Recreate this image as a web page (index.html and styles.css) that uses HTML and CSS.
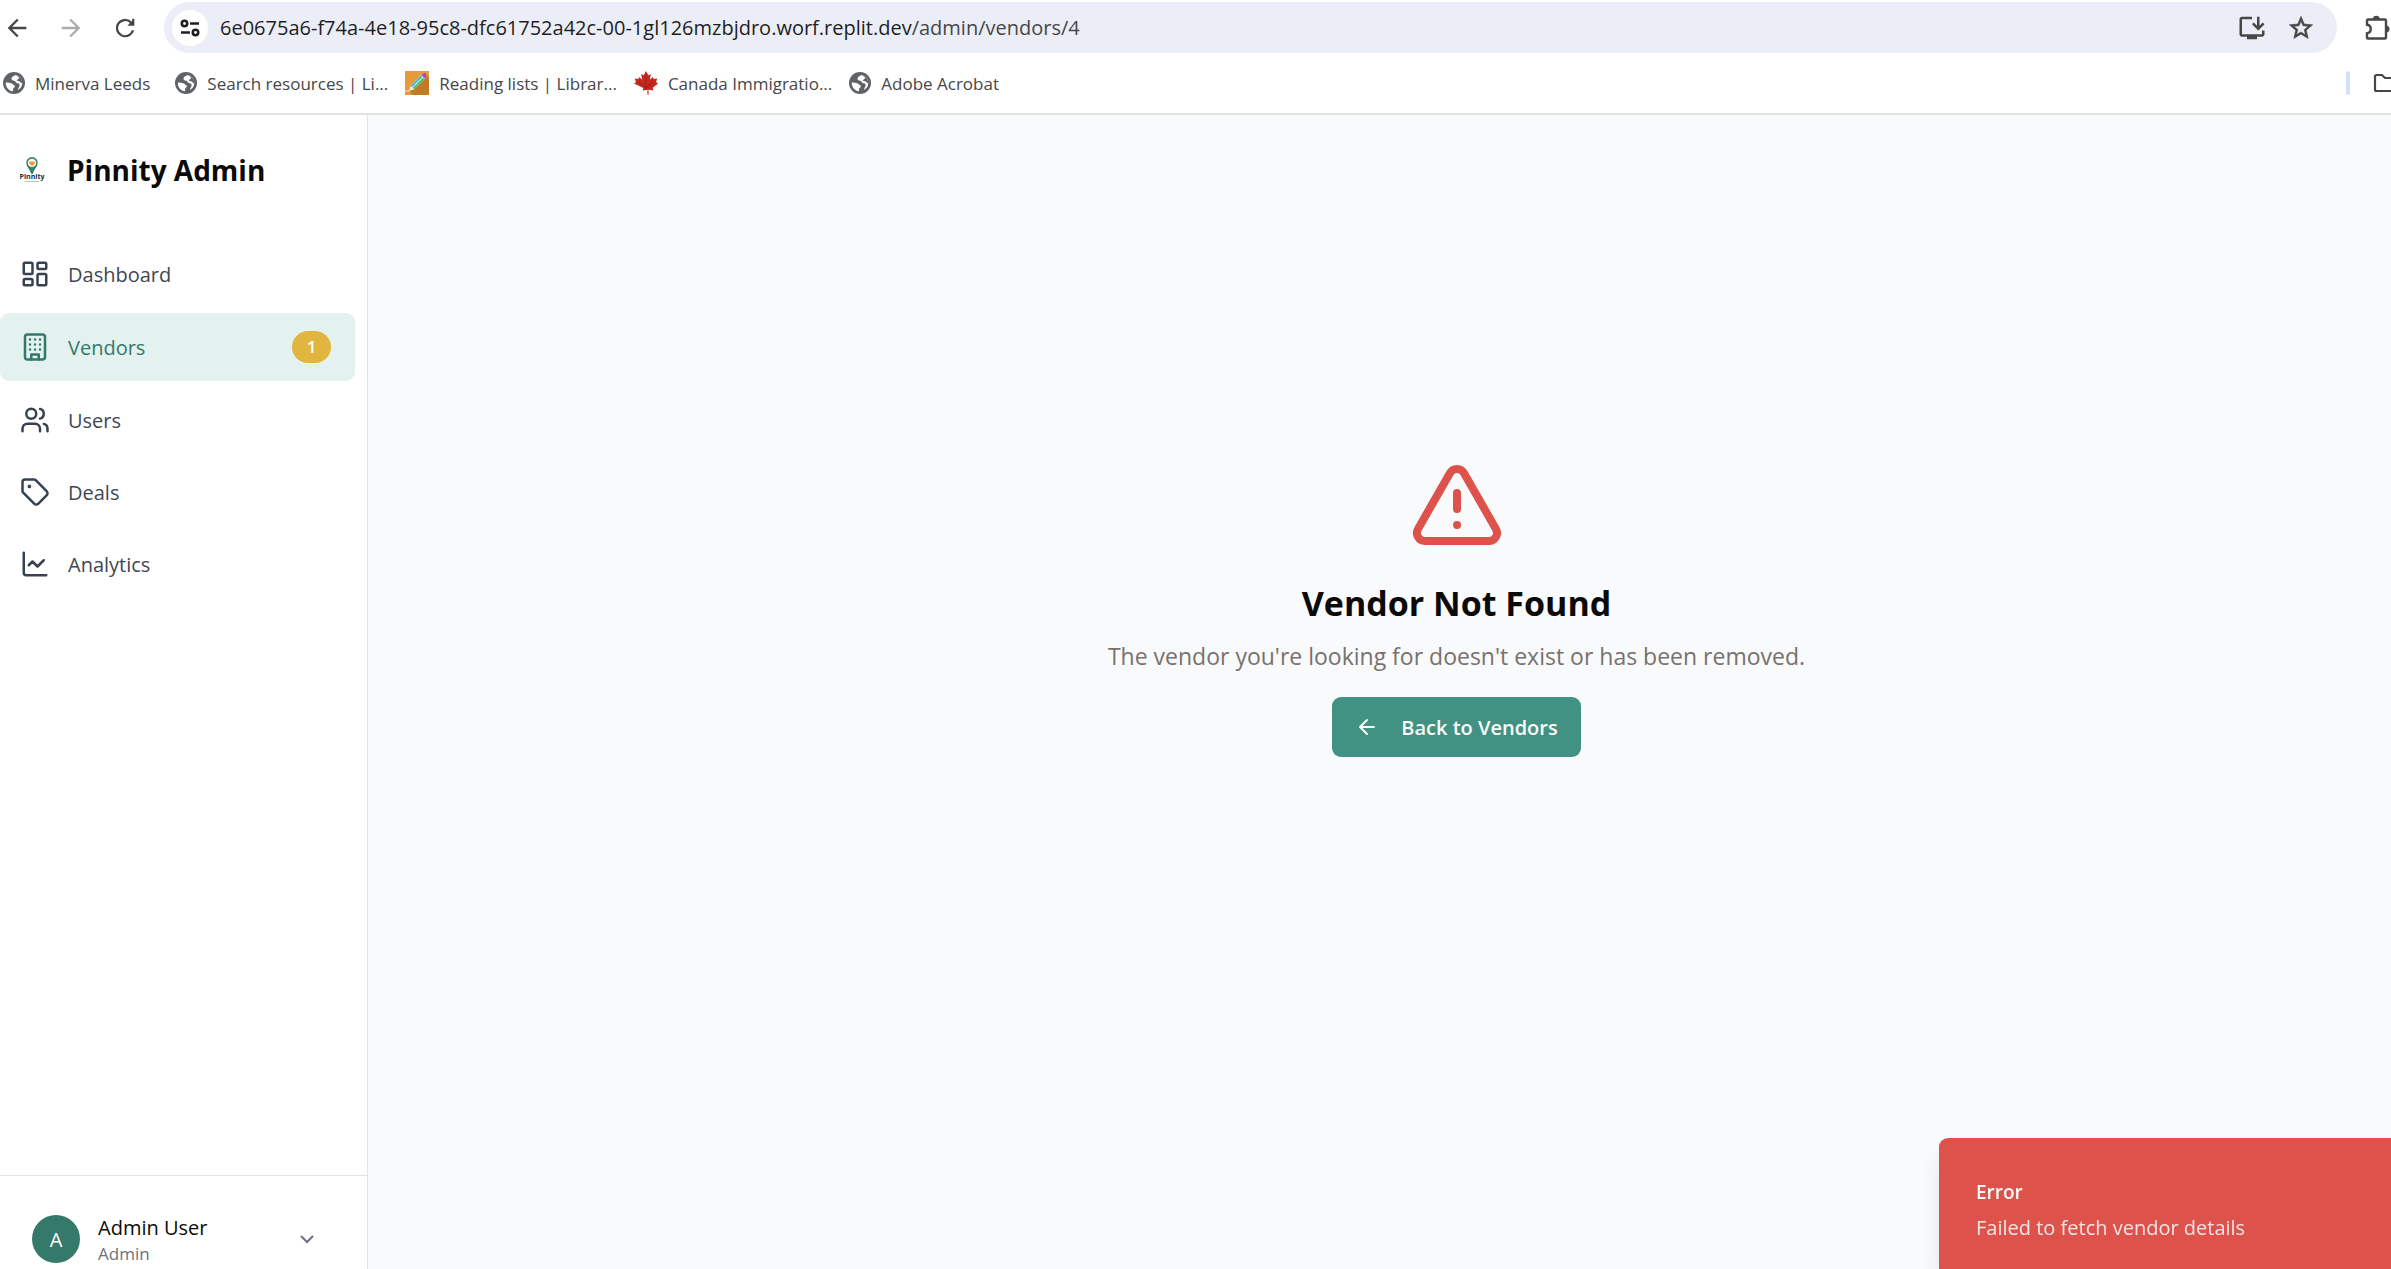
FILE: index.html
```html
<!DOCTYPE html>
<html lang="en">
<head>
<meta charset="utf-8">
<title>Pinnity Admin</title>
<link rel="stylesheet" href="styles.css">
</head>
<body>
<svg class="sprite" aria-hidden="true">
  <symbol id="globe" viewBox="0 0 24 24">
    <circle cx="12" cy="12" r="12" fill="#5f6368"/>
    <path d="M3 11.500c2 .2 4.500.1 6.500 1 1.700.8 2 2 3.300 2.300v1.800c-1.300.4-1.900 1.400-1.900 2.700v1.800C6.300 20.600 2.900 16.500 3 11.500z" fill="#fff"/>
    <path d="M14 3.300c-2.600 1-4.700 2-4.700 4 0 1.600 1.600 1.800 3 2.200 1.800.5 1.700 2.600 3.700 2.800 2 .3 2.400 1.500 2 3-.3 1.300-1.500 2.300-1.700 4.200C19.500 17.900 21 15 21 12c0-4.300-3-7.700-7-8.700z" fill="#fff"/>
    <path d="M14 3.300c1.200 1.400 3.400 1 3.400 3 0 1.700-2 1.500-2.200 3.200 1.500.4 3 .2 4 1.600.6.900 1 1.200 1.800 1 0-4.300-3-7.800-7-8.800z" fill="#5f6368"/>
  </symbol>
</svg>

<header class="browser">
  <div class="toolbar">
    <div class="history">
      <button class="tool" type="button" aria-label="Back"><svg viewBox="0 0 24 24" width="28" height="28"><path d="M20 11H7.830l5.590-5.590L12 4l-8 8 8 8 1.410-1.410L7.830 13H20z"/></svg></button>
      <button class="tool tool-off" type="button" aria-label="Forward" disabled><svg viewBox="0 0 24 24" width="28" height="28"><path d="M12 4l-1.410 1.410L16.170 11H4v2h12.170l-5.580 5.590L12 20l8-8z"/></svg></button>
      <button class="tool" type="button" aria-label="Reload"><svg viewBox="0 0 24 24" width="28" height="28"><path d="M17.650 6.350A7.960 7.960 0 0 0 12 4a8 8 0 1 0 7.900 10h-2.100A6 6 0 1 1 16.240 7.760L14 10h6V4h-1.900v1.900z"/></svg></button>
    </div>
    <div class="omnibox">
      <button class="site-info" type="button" aria-label="Site information">
        <svg viewBox="0 0 20 18" width="20" height="18" fill="none" stroke="#1f1f1f" stroke-width="2.600"><circle cx="4.500" cy="4.500" r="2.700"/><path d="M10 4.500h9M1 13.500h9"/><circle cx="15.500" cy="13.500" r="2.700"/></svg>
      </button>
      <div class="url"><span class="host">6e0675a6-f74a-4e18-95c8-dfc61752a42c-00-1gl126mzbjdro.worf.replit.dev</span>/admin/vendors/4</div>
      <button class="tool" type="button" aria-label="Install app"><svg viewBox="0 0 24 24" width="30" height="30"><path d="M20 17H4V5h8V3H4c-1.100 0-2 .9-2 2v12c0 1.100.9 2 2 2h4v2h8v-2h4c1.100 0 2-.9 2-2v-3h-2v3z"/><path d="M17 14l5-5-1.410-1.410L18 10.170V3h-2v7.170l-2.590-2.580L12 9z"/></svg></button>
      <button class="tool" type="button" aria-label="Bookmark this page"><svg viewBox="0 0 24 24" width="28" height="28"><path stroke="#474747" stroke-width=".5" d="M22 9.240l-7.190-.62L12 2 9.190 8.630 2 9.240l5.460 4.730L5.820 21 12 17.270 18.180 21l-1.630-7.030L22 9.240zM12 15.400l-3.760 2.270 1-4.280-3.320-2.880 4.380-.38L12 6.100l1.710 4.040 4.380.38-3.320 2.880 1 4.280L12 15.400z"/></svg></button>
    </div>
    <button class="tool edge" type="button" aria-label="Extensions"><svg viewBox="0 0 26 26" width="26" height="26"><path d="M3 4.500h17a1 1 0 0 1 1 1v17a1 1 0 0 1-1 1H3a1 1 0 0 1-1-1v-4.300c5-.7 5-7.700 0-8.400V5.500a1 1 0 0 1 1-1z" fill="none" stroke="#474747" stroke-width="2.400"/><path d="M8 4a3.300 3.300 0 0 1 6.600 0zM21 10.500a3.500 3.500 0 0 1 0 7z"/></svg></button>
  </div>
  <nav class="bookmarks" aria-label="Bookmarks">
    <a href="#"><svg width="22" height="22"><use href="#globe"/></svg>Minerva Leeds</a>
    <a href="#"><svg width="22" height="22"><use href="#globe"/></svg>Search resources | Li...</a>
    <a href="#"><svg width="24" height="24" viewBox="0 0 24 24"><path d="M0 0h24v24H0z" fill="#e69b3b"/><path d="M22 5l2 2v17H8l-4-4z" fill="#c17a2a"/><path d="M0 20h5" stroke="#f5dcae"/><path d="M4 20l1.500-5L18 2.500l3.500 3.500L9 18.500z" fill="#f4ead0"/><path d="M6.500 15.500L17 5" stroke="#46b9e6" stroke-width="2"/><path d="M8.500 17.500L19 7" stroke="#4cc26a" stroke-width="2"/><path d="M16.500 4L18 2.500q2-1 3 .5t.5 3L20 7.500z" fill="#a64db0"/></svg>Reading lists | Librar...</a>
    <a href="#"><svg width="24" height="24" viewBox="0 0 24 24"><path d="M12 0l2.300 4.300 2.500-1.200-1 5.600 3-2.700.9 2 3.600-.5-1.300 3.500 2 1.500-5.400 4.500.8 2.500-5-.7.300 4.700h-1.400l.3-4.700-5 .7.800-2.500L0 12.500 2 11 .7 7.500l3.600.5.9-2 3 2.700-1-5.600 2.500 1.200z" fill="#c4281f"/><path d="M12 5v14M12 17l-7-6M12 17l7-6" stroke="#96201a" fill="none"/></svg>Canada Immigratio...</a>
    <a href="#"><svg width="22" height="22"><use href="#globe"/></svg>Adobe Acrobat</a>
    <span class="divider"></span>
    <button class="tool edge folder" type="button" aria-label="All bookmarks"><svg viewBox="0 0 18 20" width="18" height="20" fill="none" stroke="#474747" stroke-width="2.200"><path d="M26 18H3.500a1.500 1.500 0 0 1-1.500-1.500v-13A1.500 1.500 0 0 1 3.500 2H9l3 3h14"/></svg></button>
  </nav>
</header>

<div class="app">
  <aside class="sidebar">
    <div class="brand">
      <svg width="26" height="26" viewBox="0 0 26 26" role="img" aria-label="Pinnity"><path d="M13 0a5.700 5.700 0 0 1 5.700 5.700c0 4.200-4 6.800-4.700 11h-2C11.300 12.500 7.300 9.900 7.300 5.700A5.700 5.700 0 0 1 13 0z" fill="#35806f"/><circle cx="13" cy="5.900" r="4.200" fill="#fff"/><path d="M13 9.200L10.200 6.500c-1-1.700 1.300-3.300 2.800-1.700 1.500-1.600 3.800 0 2.800 1.700z" fill="#f39a32"/><text x="13" y="22" text-anchor="middle" class="logo-word">Pinnity</text><path d="M6 24.500h14" stroke="#a9cfc5"/></svg>
      <span class="brand-name">Pinnity Admin</span>
    </div>
    <nav class="menu" aria-label="Main">
      <a href="#"><svg class="icon" viewBox="0 0 24 24"><rect x="3" y="3" width="7" height="9" rx="1"/><rect x="14" y="3" width="7" height="5" rx="1"/><rect x="14" y="12" width="7" height="9" rx="1"/><rect x="3" y="16" width="7" height="5" rx="1"/></svg><span>Dashboard</span></a>
      <a href="#" class="active" aria-current="page"><svg class="icon" viewBox="0 0 24 24"><rect x="4" y="2" width="16" height="20" rx="2"/><path d="M9 22v-4h6v4M8 6h.01M16 6h.01M12 6h.01M12 10h.01M12 14h.01M16 10h.01M16 14h.01M8 10h.01M8 14h.01"/></svg><span>Vendors</span><span class="badge">1</span></a>
      <a href="#"><svg class="icon" viewBox="0 0 24 24"><path d="M16 21v-2a4 4 0 0 0-4-4H6a4 4 0 0 0-4 4v2"/><circle cx="9" cy="7" r="4"/><path d="M22 21v-2a4 4 0 0 0-3-3.870M16 3.130a4 4 0 0 1 0 7.750"/></svg><span>Users</span></a>
      <a href="#"><svg class="icon" viewBox="0 0 24 24"><path d="M12.586 2.586A2 2 0 0 0 11.172 2H4a2 2 0 0 0-2 2v7.172a2 2 0 0 0 .586 1.414l8.704 8.704a2.426 2.426 0 0 0 3.420 0l6.580-6.580a2.426 2.426 0 0 0 0-3.420z"/><circle cx="7.500" cy="7.500" r=".5" fill="currentColor"/></svg><span>Deals</span></a>
      <a href="#"><svg class="icon" viewBox="0 0 24 24"><path d="M3 3v16a2 2 0 0 0 2 2h16"/><path d="m19 9-5 5-4-4-3 3"/></svg><span>Analytics</span></a>
    </nav>
    <button class="account" type="button">
      <span class="avatar">A</span>
      <span class="who"><span class="who-name">Admin User</span><span class="who-role">Admin</span></span>
      <svg class="chevron" viewBox="0 0 24 24"><path d="m6 9 6 6 6-6"/></svg>
    </button>
  </aside>

  <main class="content">
    <svg class="warning" viewBox="0 0 24 24"><path d="m21.730 18-8-14a2 2 0 0 0-3.480 0l-8 14A2 2 0 0 0 4 21h16a2 2 0 0 0 1.730-3"/><path d="M12 9v4M12 17h.01"/></svg>
    <h1>Vendor Not Found</h1>
    <p>The vendor you're looking for doesn't exist or has been removed.</p>
    <button class="primary" type="button"><svg viewBox="0 0 24 24"><path d="m12 19-7-7 7-7M19 12H5"/></svg>Back to Vendors</button>
  </main>
</div>

<div class="toast" role="alert">
  <strong>Error</strong>
  <span>Failed to fetch vendor details</span>
</div>
</body>
</html>
```
FILE: styles.css
```css
* { box-sizing: border-box; }

body {
  margin: 0;
  min-height: 100vh;
  display: flex;
  flex-direction: column;
  overflow: hidden;
  background: #fff;
  color: #0c0a09;
  font-family: "Open Sans", "Noto Sans", sans-serif;
  font-size: 20px;
}

button {
  margin: 0;
  padding: 0;
  border: 0;
  background: none;
  color: inherit;
  font: inherit;
}

a { color: inherit; text-decoration: none; }

svg { display: block; flex: none; }

.sprite { width: 0; height: 0; position: absolute; }

/* Browser chrome */
.browser { border-bottom: 2px solid #dfe3e1; }

.toolbar {
  display: flex;
  align-items: center;
  padding-top: 2px;
}

.history {
  display: flex;
  gap: 26px;
  padding-left: 3px;
  width: 164px;
}

.tool { fill: #474747; }
.tool-off { fill: #adadad; }
.edge { flex: none; overflow: hidden; }

.omnibox {
  flex: 1;
  height: 51px;
  display: flex;
  align-items: center;
  gap: 20px;
  margin-right: 28px;
  padding: 0 22px 0 8px;
  border-radius: 26px;
  background: #ebeef7;
}

.site-info {
  width: 36px;
  height: 36px;
  display: grid;
  place-items: center;
  border-radius: 50%;
  background: #fff;
}

.url {
  flex: 1;
  margin-left: -8px;
  color: #474747;
  white-space: nowrap;
}

.host { color: #1f1f1f; }

.bookmarks {
  height: 60px;
  display: flex;
  align-items: center;
  gap: 17px;
  padding-left: 3px;
  color: #474747;
  font-size: 17px;
}

.bookmarks a {
  display: flex;
  align-items: center;
  gap: 10px;
  white-space: nowrap;
}

.bookmarks a:first-child { margin-right: 8px; }

.divider {
  width: 4px;
  height: 24px;
  margin-left: auto;
  border-radius: 2px;
  background: #d3e1fd;
}

.folder { margin-left: 6px; }

/* Application */
.app {
  flex: 1;
  display: grid;
  grid-template-columns: 368px 1fr;
}

.sidebar {
  display: flex;
  flex-direction: column;
  border-right: 1px solid #e2e4e6;
}

.brand {
  height: 110px;
  display: flex;
  align-items: center;
  gap: 22px;
  padding-left: 19px;
}

.brand-name { font-size: 28px; font-weight: 700; }

.logo-word { font: 700 7px "Open Sans", sans-serif; fill: #23313d; }

.menu {
  flex: 1;
  display: flex;
  flex-direction: column;
  gap: 6px;
  padding: 16px 12px 16px 0;
}

.menu a {
  height: 66px;
  display: flex;
  align-items: center;
  gap: 18px;
  padding: 0 24px 0 20px;
  border-radius: 9px;
  color: #3f4654;
}

.menu .active {
  height: 68px;
  background: #e3f1ef;
  color: #35796b;
}

.icon {
  width: 30px;
  height: 30px;
  fill: none;
  stroke: #374151;
  stroke-width: 2;
  stroke-linecap: round;
  stroke-linejoin: round;
}

.active .icon { stroke: #35796b; }

.badge {
  width: 39px;
  height: 32px;
  margin-left: auto;
  border-radius: 16px;
  background: #e2b53e;
  color: #fff;
  font-size: 17px;
  font-weight: 600;
  line-height: 32px;
  text-align: center;
}

.account {
  display: flex;
  gap: 18px;
  padding: 39px 48px 2px 32px;
  border-top: 1px solid #e2e4e6;
  text-align: left;
}

.avatar {
  width: 48px;
  height: 48px;
  border-radius: 50%;
  background: #35796b;
  color: #fff;
  line-height: 50px;
  text-align: center;
}

.who { flex: 1; line-height: 26px; }
.who-name { display: block; font-weight: 500; }
.who-role { display: block; color: #6b7280; font-size: 17px; }

.chevron {
  width: 24px;
  height: 48px;
  fill: none;
  stroke: #6b7280;
  stroke-width: 2;
}

.content {
  display: flex;
  flex-direction: column;
  align-items: center;
  padding: 342px 0 0 154px;
  background: #f9fafc;
}

.warning {
  width: 96px;
  height: 96px;
  fill: none;
  stroke: #de524c;
  stroke-width: 2;
  stroke-linecap: round;
  stroke-linejoin: round;
}

h1 {
  margin: 26px 0 0;
  font-size: 34px;
  line-height: 48px;
}

.content p {
  margin: 11px 0 23px;
  color: #78716c;
  font-size: 23px;
  line-height: 36px;
}

.primary {
  height: 60px;
  display: flex;
  align-items: center;
  gap: 22px;
  padding: 0 23px;
  border-radius: 9px;
  background: #429283;
  color: #fafaf9;
  font-weight: 600;
}

.primary svg {
  width: 24px;
  height: 24px;
  fill: none;
  stroke: currentColor;
  stroke-width: 2;
  stroke-linecap: round;
  stroke-linejoin: round;
}

.toast {
  position: fixed;
  right: 0;
  bottom: 0;
  width: 452px;
  display: flex;
  flex-direction: column;
  padding: 36px 37px 23px;
  border-radius: 9px 0 0 0;
  background: #de524c;
  box-shadow: 0 15px 23px -4px rgba(0, 0, 0, .12), 0 6px 9px -6px rgba(0, 0, 0, .12);
  color: #fafaf9;
  line-height: 36px;
}

.toast strong { font-size: 19px; font-weight: 600; }
.toast span { opacity: .88; }
```
